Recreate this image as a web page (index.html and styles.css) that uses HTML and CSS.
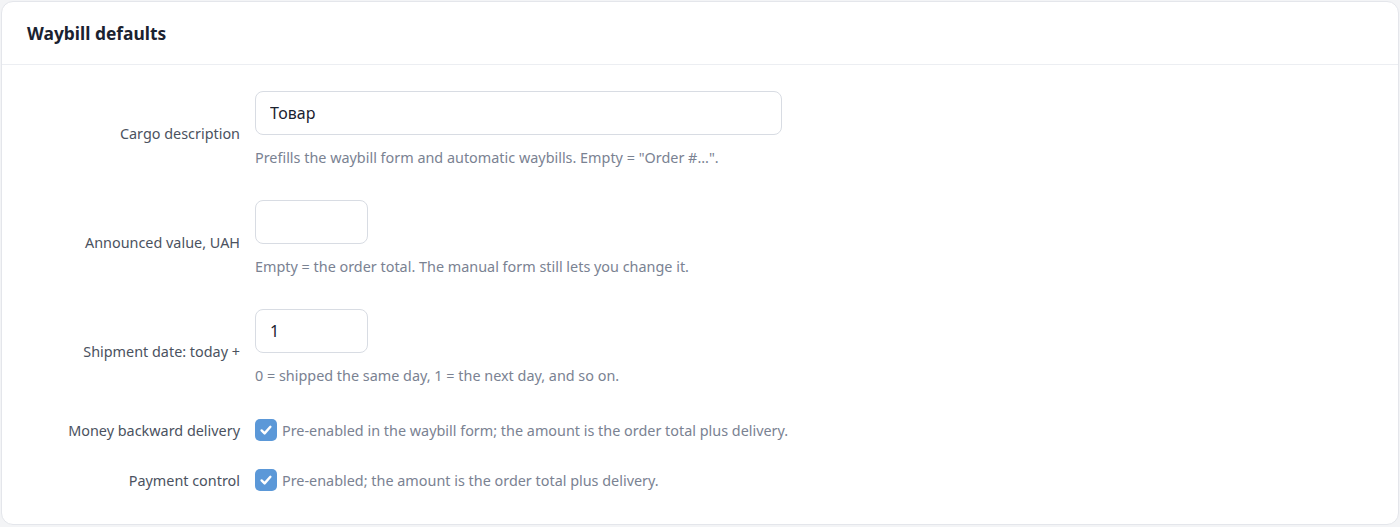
FILE: index.html
```html
<!DOCTYPE html>
<html>
<head>
<meta charset="utf-8">
<link rel="stylesheet" href="styles.css">
</head>
<body>
<div class="card">
  <div class="card-head"><h2 class="title">Waybill defaults</h2></div>
  <div class="card-body">
    <div class="row">
      <div class="label">Cargo description</div>
      <div class="field">
        <input class="input input-wide" type="text" value="Товар">
        <div class="help">Prefills the waybill form and automatic waybills. Empty = "Order #...".</div>
      </div>
    </div>
    <div class="row">
      <div class="label">Announced value, UAH</div>
      <div class="field">
        <input class="input input-small" type="text" value="">
        <div class="help">Empty = the order total. The manual form still lets you change it.</div>
      </div>
    </div>
    <div class="row row-last-field">
      <div class="label">Shipment date: today +</div>
      <div class="field">
        <input class="input input-small" type="text" value="1">
        <div class="help">0 = shipped the same day, 1 = the next day, and so on.</div>
      </div>
    </div>
    <div class="row row-check">
      <div class="label">Money backward delivery</div>
      <label class="check">
        <span class="box"><svg width="16" height="16" viewBox="0 0 16 16"><path d="M3.6 8.4l3 3 5.8-6.6" fill="none" stroke="#fff" stroke-width="2.4" stroke-linecap="round" stroke-linejoin="round"/></svg></span>
        <span class="check-text">Pre-enabled in the waybill form; the amount is the order total plus delivery.</span>
      </label>
    </div>
    <div class="row row-check">
      <div class="label">Payment control</div>
      <label class="check">
        <span class="box"><svg width="16" height="16" viewBox="0 0 16 16"><path d="M3.6 8.4l3 3 5.8-6.6" fill="none" stroke="#fff" stroke-width="2.4" stroke-linecap="round" stroke-linejoin="round"/></svg></span>
        <span class="check-text">Pre-enabled; the amount is the order total plus delivery.</span>
      </label>
    </div>
  </div>
</div>
</body>
</html>
```

FILE: styles.css
```css
* { box-sizing: border-box; }
html, body { margin: 0; padding: 0; background: #f3f4f6; }
body {
  padding: 1px 1px 2px 1px;
  font-family: "Noto Sans", sans-serif;
  -webkit-font-smoothing: antialiased;
}
.card {
  background: #fff;
  border: 1px solid #e4e6eb;
  border-radius: 12px;
  height: 524px;
}
.card-head {
  height: 63px;
  border-bottom: 1px solid #eceef2;
  display: flex;
  align-items: center;
  padding: 0 25px;
}
.title {
  margin: 0;
  font-size: 17.4px;
  font-weight: 700;
  color: #1b2230;
}
.card-body {
  padding: 26px 0 0 0;
}
.row {
  display: grid;
  grid-template-columns: 238px 1fr;
  column-gap: 15px;
  margin-bottom: 32px;
}
.row-last-field { margin-bottom: 33px; }
.row-check { margin-bottom: 28px; }
.label {
  text-align: right;
  font-size: 14.4px;
  color: #4b5260;
  align-self: center;
  padding-top: 7px;
}
.row-check .label { padding-top: 0; }
.field { display: flex; flex-direction: column; align-items: flex-start; }
.input {
  height: 44px;
  border: 1px solid #d8dce3;
  border-radius: 8px;
  padding: 0 14px;
  font-family: "Noto Sans", sans-serif;
  font-size: 16px;
  color: #1b2230;
  background: #fff;
  outline: none;
}
.input-wide { width: 527px; }
.input-small { width: 113px; }
.help {
  margin-top: 13px;
  font-size: 14.4px;
  line-height: 20px;
  color: #7a8292;
}
.check {
  display: flex;
  align-items: center;
  gap: 5px;
}
.box {
  width: 22px;
  height: 22px;
  border-radius: 5px;
  background: #5b98d8;
  display: flex;
  align-items: center;
  justify-content: center;
}
.check-text {
  font-size: 14.4px;
  color: #7a8292;
}
```
